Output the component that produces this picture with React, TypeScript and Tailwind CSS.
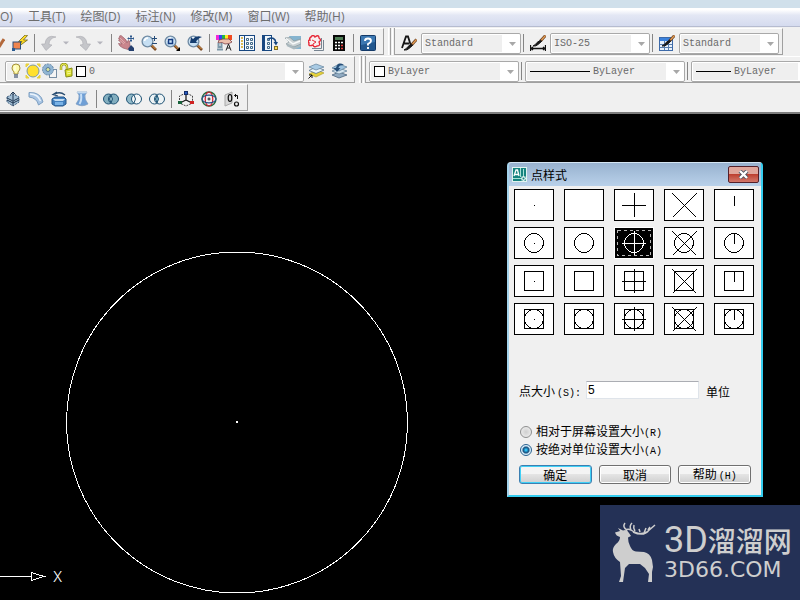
import { useState } from "react";
import type { ReactNode } from "react";

interface IIcon {
	children: ReactNode;
}

interface IToolButton {
	label: string;
	children: ReactNode;
}

interface ICombo {
	label: string;
	value: string;
	width: string;
	children?: ReactNode;
}

const menuItems = ["O)", "工具(T)", "绘图(D)", "标注(N)", "修改(M)", "窗口(W)", "帮助(H)"];

const shapes = ["none", "circle", "square", "both"];
const marks = ["dot", "blank", "plus", "cross", "tick"];

function Icon({ children }: IIcon) {
	return (
		<svg className="block h-4 w-4 shrink-0" viewBox="0 0 16 16" fill="none">
			{children}
		</svg>
	);
}

function ToolButton({ label, children }: IToolButton) {
	return (
		<button aria-label={label} className="block shrink-0">
			<Icon>{children}</Icon>
		</button>
	);
}

function Separator() {
	return <div className="mx-1.5 h-[18px] w-px shrink-0 bg-[#858585]" />;
}

function ThinSeparator() {
	return <div className="h-[18px] w-px shrink-0 bg-[#858585]" />;
}

function Grip() {
	return (
		<div className="ml-1 flex shrink-0 gap-px self-stretch">
			<div className="w-[3px] border-r border-l border-r-[#a0a0a0] border-l-white" />
			<div className="w-[3px] border-r border-l border-r-[#a0a0a0] border-l-white" />
		</div>
	);
}

function Bar({ children }: IIcon) {
	return (
		<div className="flex h-[27px] shrink-0 items-center border-t border-r border-b border-t-white border-r-[#a0a0a0] border-b-[#a0a0a0] pt-[3px]">
			{children}
		</div>
	);
}

function DropArrow() {
	return (
		<svg className="pointer-events-none absolute top-2 right-1 h-1 w-[7px]" viewBox="0 0 7 4">
			<path d="M0 0H7L3.5 4Z" fill="#a8a8a8" />
		</svg>
	);
}

function Combo({ label, value, width, children }: ICombo) {
	return (
		<div
			className={`${width} relative flex h-[21px] shrink-0 items-center rounded-[2px] border border-[#a9a9a9] bg-[#efefef] outline-1 -outline-offset-2 outline-white`}
		>
			{children}
			<select
				aria-label={label}
				className="h-[17px] min-w-0 flex-1 appearance-none border-r-[18px] border-white bg-[#efefef] pt-px pl-[3px] font-['Liberation_Mono',monospace] text-[10px] leading-4 text-[#6a6a6a]"
			>
				<option>{value}</option>
			</select>
			<DropArrow />
		</div>
	);
}

function Caret() {
	return (
		<svg className="h-1 w-[10px] shrink-0" viewBox="0 0 10 4">
			<path d="M2 0.5H8L5 3.5Z" fill="#b4b4bc" />
		</svg>
	);
}

function Lens() {
	return (
		<>
			<path d="M10 10L15 15" stroke="#7a4a24" strokeWidth="2.6" />
			<path d="M10.5 10L14.5 14" stroke="#e09a4a" strokeWidth="1" />
			<circle cx="6.5" cy="6.5" r="5.4" fill="#c6dff3" stroke="#6f8aa3" strokeWidth="1.3" />
			<path d="M3.5 6A3.5 3.5 0 0 1 7 3" stroke="#fff" strokeWidth="1.6" />
		</>
	);
}

function Brush() {
	return (
		<>
			<path d="M15.500 0.500L10.500 6" stroke="#5c3a20" strokeWidth="2.8" />
			<path d="M15.500 0.500L11.500 5" stroke="#e39a52" strokeWidth="1.5" />
			<path d="M11.500 6.500L8 9.500Q6 11.500 3 11Q6 9.500 7 7.500L10 5.500Z" fill="#171717" stroke="#171717" />
		</>
	);
}

function StandardBar() {
	return (
		<Bar>
			<div className="-ml-[11px] flex gap-[7px]">
				<ToolButton label="特性匹配">
					<path d="M15 4L10 12" stroke="#b3693c" strokeWidth="3" />
				</ToolButton>
				<ToolButton label="块编辑器">
					<path d="M13 0L6.500 6.500H10L6 12L15.500 5H11.500L15.500 0.500Z" fill="#ffdc25" stroke="#5b5415" strokeWidth="0.7" />
					<rect x="1" y="7" width="7.500" height="7" fill="#ef854e" stroke="#294f7b" />
					<path d="M0 13H3V16H0Z" fill="#2a5b91" />
				</ToolButton>
			</div>
			<Separator />
			<div className="flex items-center gap-1">
				<ToolButton label="放弃">
					<path d="M15 2Q5 -1 4 9H0.500L5 15.500L11 10L8 9.500Q8 3 15 2Z" fill="#c5c6ca" stroke="#aaaab0" strokeWidth="0.6" />
				</ToolButton>
				<Caret />
				<ToolButton label="重做">
					<path d="M1 2Q11 -1 12 9H15.500L11 15.500L5 10L8 9.500Q8 3 1 2Z" fill="#c5c6ca" stroke="#aaaab0" strokeWidth="0.6" />
				</ToolButton>
				<Caret />
			</div>
			<Separator />
			<div className="flex gap-[7px]">
				<ToolButton label="实时平移">
					<path
						d="M0.500 3L2 2.500L1.500 1L3 0.500L6 3L8 5L9 8L10 5.500L11.500 6L12 11L10 14.500L5 13L2 11L0.500 8.500L4 9L0.500 5L1.500 4.500Z"
						fill="#c9858c"
						stroke="#9b5f69"
						strokeWidth="0.7"
					/>
					<path d="M2 3L7 8M2 5.500L6 9" stroke="#e8bcbc" strokeWidth="0.7" />
					<path d="M10 14L13 10L16 13V16H11Z" fill="#243f6e" />
					<path d="M13 0V7M9.500 3.500H16M12 1.500H14M12 5.500H14M10.500 2.500V4.500M15.500 2.500V4.500" stroke="#2e588d" />
				</ToolButton>
				<ToolButton label="实时缩放">
					<Lens />
					<path d="M13.500 1V6M11 3.500H16M11 8.500H16" stroke="#254b78" />
				</ToolButton>
				<ToolButton label="窗口缩放">
					<Lens />
					<rect x="4.500" y="4.500" width="4" height="4" stroke="#153b80" strokeWidth="1.5" />
					<path d="M16 12V16H12Z" fill="#000" />
				</ToolButton>
				<ToolButton label="缩放上一个">
					<Lens />
					<path d="M3 8L4 2L6 4Q9 0 15 2Q10 4 9 7L11 8Z" fill="#153d70" />
				</ToolButton>
			</div>
			<Separator />
			<div className="flex gap-[7px]">
				<ToolButton label="特性">
					<path d="M0 0H3V5H0Z" fill="#f326d8" />
					<path d="M3 0H6V5H3Z" fill="#3343f1" />
					<path d="M6 0H9V5H6Z" fill="#20b846" />
					<path d="M9 0H12V5H9Z" fill="#ffec21" />
					<path d="M12 0H16V5H12Z" fill="#f04a20" />
					<path d="M3 5L7 4L13 4L16 7L13 8.500L9 9L6 7.500L2 8Z" fill="#ecc0ad" stroke="#7a4046" strokeWidth="0.8" />
					<path d="M2.500 8V12H5.500V8M1 14.500H7" stroke="#7c98a8" strokeWidth="2" />
					<path d="M10 15.500L12.500 9L15 15.500M11 13H14" stroke="#222" />
				</ToolButton>
				<ToolButton label="设计中心">
					<rect x="0.500" y="0.500" width="15" height="15" fill="#f7fbff" stroke="#174780" />
					<path d="M5.500 1V15" stroke="#174780" />
					<path d="M2 3H4M2 6H4M2 9H4M2 12H4" stroke="#d2a51f" strokeWidth="1.5" />
					<path d="M7.500 3.500H9.500V5.500H7.500ZM11.500 3.500H13.500V5.500H11.500ZM7.500 7.500H9.500V9.500H7.500ZM11.500 7.500H13.500V9.500H11.500ZM7.500 11.500H9.500V13.500H7.500ZM11.500 11.500H13.500V13.500H11.500Z" stroke="#416887" />
				</ToolButton>
				<ToolButton label="工具选项板">
					<rect x="0.500" y="0.500" width="9" height="15" fill="#eef6fb" stroke="#174780" />
					<path d="M2 1V15" stroke="#174780" strokeWidth="2" />
					<path d="M5.500 3.500H7.500V5.500H5.500ZM5.500 7.500H7.500V9.500H5.500ZM5.500 11.500H7.500V13.500H5.500Z" stroke="#416887" />
					<path d="M6 4Q13 1 14 8" stroke="#174780" strokeWidth="1.500" />
					<path d="M11.500 7H16L14 10.500Z" fill="#174780" />
					<rect x="12.500" y="11.500" width="3" height="3" fill="#ffdf53" stroke="#836d24" />
				</ToolButton>
				<ToolButton label="图纸集管理器">
					<path d="M4 1H16V14H9Z" fill="#86b4cf" />
					<path d="M0 3L5 2.500L9 6L16 4V9L9 12L1 9L4 7Z" fill="#cbd2d4" stroke="#84959b" strokeWidth="0.7" />
					<path d="M1 3.500L8 9L15 6" stroke="#f7f9f9" strokeWidth="1.500" />
					<path d="M2 10L9 13.500L16 10.500" stroke="#aab8be" strokeWidth="2" />
				</ToolButton>
				<ToolButton label="标记集管理器">
					<path d="M4 13.500H13.500V3M6 15.500H15.500V5" stroke="#778491" />
					<path
						d="M3 2Q5 -1 7 2Q11 -1 11 3Q14 5 11 7Q13 11 9 11Q6 13 5 10Q0 12 1 8Q-1 5 2 5Q1 3 3 2Z"
						fill="#f8efef"
						stroke="#e72938"
						strokeWidth="1.4"
					/>
					<path d="M4 5L8 7L5 9" stroke="#e72938" />
				</ToolButton>
				<ToolButton label="快速计算器">
					<rect x="2" y="0" width="12" height="16" fill="#080808" />
					<rect x="4" y="2" width="8" height="3" fill="#4f7d55" />
					<path d="M4 7.500H6M7 7.500H9M10 7.500H12M4 10.500H6M7 10.500H9M4 13.500H6M7 13.500H9" stroke="#fff" strokeWidth="1.5" />
					<path d="M10 10.500H12M10 13.500H12" stroke="#e73b3b" strokeWidth="1.500" />
				</ToolButton>
			</div>
			<Separator />
			<div className="pr-[7px]">
				<ToolButton label="帮助">
					<rect x="0.500" y="0.500" width="15" height="15" rx="1" fill="#23588f" stroke="#143a68" />
					<path d="M1 1H15V7L1 10Z" fill="#3c78b2" />
					<path d="M5 6Q5 3.500 8 3.500Q11 3.500 11 6Q11 7.500 8 9V10.500M8 12V14" stroke="#fff" strokeWidth="1.9" />
				</ToolButton>
			</div>
		</Bar>
	);
}

function StylesBar() {
	return (
		<Bar>
			<div className="pr-1 pl-1.5">
				<ToolButton label="文字样式">
					<path d="M1 13L5 1.500H7L10 11M3 8.500H8" stroke="#151515" strokeWidth="1.8" />
					<g transform="translate(0 4)">
						<Brush />
					</g>
				</ToolButton>
			</div>
			<Combo label="文字样式" value="Standard" width="w-[100px]" />
			<div className="pl-0.5">
				<ThinSeparator />
			</div>
			<div className="pr-1 pl-1.5">
				<ToolButton label="标注样式">
					<path d="M0.500 10V16M15.500 10V16M1 13.500H15M3 12L1 13.500L3 15M13 12L15 13.500L13 15" stroke="#111" strokeWidth="1.3" />
					<Brush />
				</ToolButton>
			</div>
			<Combo label="标注样式" value="ISO-25" width="w-[100px]" />
			<div className="pl-0.5">
				<ThinSeparator />
			</div>
			<div className="pr-1 pl-1.5">
				<ToolButton label="表格样式">
					<rect x="0.500" y="2.500" width="13" height="13" fill="#e8f1fb" stroke="#3d6aa9" />
					<rect x="1" y="3" width="12" height="3" fill="#3b82dd" />
					<path d="M1 9.500H13M1 12.500H13M5.500 6V15M9.500 6V15" stroke="#587eae" />
					<Brush />
				</ToolButton>
			</div>
			<div className="pr-[3px]">
				<Combo label="表格样式" value="Standard" width="w-[100px]" />
			</div>
		</Bar>
	);
}

function LayersBar() {
	return (
		<Bar>
			<div className="pl-[5px]">
				<Combo label="图层" value="0" width="w-[299px]">
					<div className="flex items-center gap-px pl-0.5">
						<Icon>
							<path d="M8 1Q4 1 4 5Q4 7 6 9V11H10V9Q12 7 12 5Q12 1 8 1Z" fill="#fffcad" stroke="#a48e39" />
							<path d="M6 12H10M6 14H10" stroke="#64738a" strokeWidth="1.500" />
							<path d="M7 3V8" stroke="#fff" />
						</Icon>
						<Icon>
							<path d="M1 1H4L1 4ZM15 1V4L12 1ZM1 15V12L4 15ZM15 15H12L15 12Z" fill="#e8d23d" stroke="#e8d23d" />
							<circle cx="8" cy="8" r="6" fill="#ffe02e" stroke="#7f9a9c" />
						</Icon>
						<Icon>
							<rect x="7.500" y="6.500" width="7" height="8" fill="#f4f4f4" stroke="#778da3" />
							<circle cx="6" cy="6.500" r="5.500" fill="#90b5d3" stroke="#6787a5" strokeDasharray="2 1" />
							<circle cx="6" cy="6.500" r="2" fill="#dce89b" stroke="#55799c" />
						</Icon>
						<Icon>
							<path d="M2 7V4Q2 1 5 1Q8 1 8 4V8" stroke="#97981e" strokeWidth="2.500" />
							<path d="M2 7V4Q2 1 5 1Q8 1 8 4V8" stroke="#eced55" />
							<path d="M6 7L13 5V13L7 14Z" fill="#d7dc2b" stroke="#858a16" />
							<path d="M8 9L12 8M8 11L12 10" stroke="#f9fb9a" />
						</Icon>
						<div className="h-[11px] w-[10px] border border-black bg-white" />
					</div>
				</Combo>
			</div>
			<div className="flex gap-[7px] pr-[7px] pl-1">
				<ToolButton label="将对象的图层置为当前">
					<path d="M1 11L9 7L16 10L8 14Z" fill="#e4d23d" stroke="#a89520" strokeWidth="0.600" />
					<path d="M1 7.500L8 4L16 7L8 10.500Z" fill="#eef7fb" stroke="#58758c" strokeWidth="0.800" />
					<path d="M1 4L8 1L16 4L8 7Z" fill="#a9cbe4" stroke="#6d8ba3" strokeWidth="0.800" />
					<path d="M0.500 15.500L4 12M1 12H4V15" stroke="#111" />
				</ToolButton>
				<ToolButton label="上一个图层">
					<path d="M1 12L8 9L16 12L8 15Z" fill="#91abc2" stroke="#4a657e" strokeWidth="0.800" />
					<path d="M1 8L8 5L16 8L8 11Z" fill="#d6e7f1" stroke="#67859d" strokeWidth="0.800" />
					<path d="M1 5L8 1L16 4L8 8Z" fill="#9cc2df" stroke="#67859d" strokeWidth="0.800" />
					<path d="M13 2Q7 -2 5 5H2.500L6 9L9.500 5H7.500Q8 1.500 13 2Z" fill="#254e78" />
				</ToolButton>
			</div>
		</Bar>
	);
}

function PropertiesBar() {
	return (
		<Bar>
			<div className="flex items-center pl-[3px]">
				<Combo label="颜色" value="ByLayer" width="w-[150px]">
					<div className="ml-1 h-[11px] w-[11px] shrink-0 border border-black bg-white" />
				</Combo>
				<div className="pr-[3px] pl-0.5">
					<ThinSeparator />
				</div>
				<Combo label="线型" value="ByLayer" width="w-[160px]">
					<div className="ml-1 h-px w-[60px] shrink-0 bg-black" />
				</Combo>
				<div className="pr-[3px] pl-0.5">
					<ThinSeparator />
				</div>
				<Combo label="线宽" value="ByLayer" width="w-[126px]">
					<div className="ml-1 h-px w-[35px] shrink-0 bg-black" />
				</Combo>
			</div>
		</Bar>
	);
}

function ModelingBar() {
	return (
		<Bar>
			<div className="flex gap-[7px] pl-[5px]">
				<ToolButton label="拉伸">
					<path d="M2 6L8 3L14 6V11L8 15L2 11Z" fill="#a5c1d7" stroke="#38597a" strokeDasharray="2 1" />
					<path d="M8 1V9M5.500 3.500L8 1L10.500 3.500M2 7L8 10L14 7M8 10V15M2 9L8 12L14 9" stroke="#203752" />
				</ToolButton>
				<ToolButton label="扫掠">
					<path d="M1 1.500Q13 1 15 11L10.500 14Q9 7 1 6Z" fill="#a9c5e4" stroke="#7d9fc1" />
					<path d="M2 3Q10 3 12.500 10" stroke="#e9f3fc" strokeWidth="1.500" />
				</ToolButton>
				<ToolButton label="旋转">
					<path d="M1 8L4 6H13L15 8V13L12 15H4L1 13Z" fill="#4380be" stroke="#25568a" />
					<path d="M2 8H14L12 10H4Z" fill="#c3dcf1" />
					<path d="M4 11H12V14H4Z" fill="#79b2e6" />
					<path d="M14 4Q9 0 4 3M6 1L2 3.500L7 5" stroke="#294c70" strokeWidth="1.300" />
				</ToolButton>
				<ToolButton label="放样">
					<path d="M3 1H13L11 4Q10 8 14 13Q8 16.500 2 13Q6 8 5 4Z" fill="#6f9fd6" stroke="#7a9abd" strokeWidth="0.700" />
					<path d="M7 3Q8 9 5.500 13" stroke="#c9e0f6" strokeWidth="2" />
					<ellipse cx="8" cy="1.500" rx="5" ry="1" fill="#c4daef" />
				</ToolButton>
			</div>
			<Separator />
			<div className="flex gap-[7px]">
				<ToolButton label="并集">
					<circle cx="5.500" cy="8" r="5" fill="#82aebf" stroke="#1e5274" />
					<circle cx="10.500" cy="8" r="5" fill="#82aebf" stroke="#1e5274" />
					<path d="M8 4Q11 8 8 12Q5 8 8 4Z" fill="#9dc6d1" stroke="#1e5274" />
				</ToolButton>
				<ToolButton label="差集">
					<circle cx="5.500" cy="8" r="5" fill="#91bac9" stroke="#1e5274" />
					<circle cx="10.500" cy="8" r="5" fill="#f3f7f8" stroke="#1e5274" />
					<path d="M8 4Q11 8 8 12" stroke="#1e5274" />
				</ToolButton>
				<ToolButton label="交集">
					<circle cx="5.500" cy="8" r="5" fill="#edf3f5" stroke="#1e5274" />
					<circle cx="10.500" cy="8" r="5" fill="#edf3f5" stroke="#1e5274" />
					<path d="M8 4Q11 8 8 12Q5 8 8 4Z" fill="#82b5c8" stroke="#1e5274" />
				</ToolButton>
			</div>
			<Separator />
			<div className="flex gap-[7px] pr-[7px]">
				<ToolButton label="三维移动">
					<path d="M8 3V9L2 12M8 9L14 12" stroke="#111" strokeWidth="1.200" />
					<path d="M1.500 12V5L8 2L14.500 5V12L8 15Z" stroke="#444" strokeDasharray="2 1" />
					<rect x="6.500" y="0.500" width="3" height="3" fill="#2559bd" stroke="#132c68" />
					<rect x="0" y="10" width="4" height="3" fill="#17623b" />
					<rect x="12" y="10" width="4" height="3" fill="#cf2222" />
				</ToolButton>
				<ToolButton label="三维旋转">
					<circle cx="8" cy="8" r="7" stroke="#256a3b" strokeWidth="1.300" />
					<ellipse cx="8" cy="8" rx="3.800" ry="7" stroke="#d41f31" strokeWidth="1.200" />
					<ellipse cx="8" cy="8" rx="7" ry="3.800" stroke="#28528a" strokeWidth="1.200" />
					<path d="M8 6.500V9.500M6.500 8H9.500" stroke="#222" />
				</ToolButton>
				<ToolButton label="三维对齐">
					<path d="M1 4L8 1V12L1 15Z" fill="#d9d9d9" stroke="#a9a9a9" />
					<ellipse cx="6" cy="7" rx="1.800" ry="3.500" stroke="#111" strokeWidth="1.200" />
					<path d="M10.500 4.500H13.500V8M10.500 4.500L12 3M10.500 4.500L12 6" stroke="#111" />
					<circle cx="12.500" cy="13" r="2" stroke="#111" strokeWidth="1.200" />
				</ToolButton>
			</div>
		</Bar>
	);
}

interface IPointGlyph {
	shape: string;
	mark: string;
	selected: boolean;
}

function PointGlyph({ shape, mark, selected }: IPointGlyph) {
	return (
		<svg
			className="block h-8 w-10"
			viewBox="0 0 40 32"
			fill="none"
			stroke={selected ? "#fff" : "#000"}
			shapeRendering="crispEdges"
		>
			<rect x="0.5" y="0.5" width="39" height="31" fill={selected ? "#000" : "#fff"} />
			{selected && <rect x="3.500" y="3.500" width="33" height="25" stroke="#b8b8b8" strokeDasharray="3 3" />}
			{(shape === "circle" || shape === "both") && <circle cx="20" cy="16" r="9.500" />}
			{(shape === "square" || shape === "both") && <rect x="10.500" y="6.500" width="19" height="19" />}
			{mark === "dot" && <path d="M20 16.500H21" />}
			{mark === "plus" && <path d="M8 16.500H32M20.500 4V28" />}
			{mark === "cross" && <path d="M8.500 4.500L32.500 28.500M32.500 4.500L8.500 28.500" />}
			{mark === "tick" && <path d={shape === "none" ? "M20.500 7V17" : "M20.500 6V17"} />}
		</svg>
	);
}

const actionButton =
	"h-[19px] w-[73px] rounded-[3px] border bg-linear-to-b from-[#f4f4f4] from-45% via-[#e4e4e4] via-50% to-[#cfcfcf] leading-4";

function PointStyleDialog() {
	const [selected, setSelected] = useState("circle-plus");
	const [size, setSize] = useState("5");
	const [mode, setMode] = useState("absolute");

	return (
		<section
			aria-label="点样式"
			className="absolute top-12 right-[37px] w-64 rounded-t-[4px] border-x-2 border-t border-b-2 border-t-[#d4e4f2] border-r-[#35cdef] border-b-[#35cdef] border-l-[#a4d3ec] bg-[#f0f0f0] font-['Noto_Sans_CJK_SC',sans-serif] text-xs leading-4 text-black"
		>
			<header className="flex h-[23px] items-center rounded-t-[2px] bg-linear-to-b from-[#98b2cf] to-[#b9d1ea] pr-0.5 pl-[3px]">
				<svg className="h-[15px] w-[15px]" viewBox="0 0 15 15" fill="none">
					<rect x="0.500" y="0.500" width="14" height="14" fill="#15837f" stroke="#e1f3ef" />
					<path d="M2 9L4 3H5.500L7 9M3 7.500H6" stroke="#fff" strokeWidth="1.300" />
					<path d="M8.500 1V10M1 11.500H9M11.500 2V14M8 11.500H14" stroke="#a8e2d7" />
					<rect x="10" y="10" width="3" height="3" fill="#15837f" stroke="#fff" />
				</svg>
				<h1 className="flex-1 pl-1">点样式</h1>
				<button
					aria-label="关闭"
					className="flex h-[17px] w-[31px] items-center justify-center rounded-[2px] border border-[#54202a] bg-linear-to-b from-[#e0a69c] from-45% via-[#bd4031] via-50% to-[#d2776a]"
				>
					<svg className="h-[9px] w-[11px]" viewBox="0 0 11 9">
						<path d="M2 1L9 8M9 1L2 8" stroke="#4c5361" strokeWidth="4" />
						<path d="M2 1L9 8M9 1L2 8" stroke="#fff" strokeWidth="2.400" />
					</svg>
				</button>
			</header>
			<div className="px-[5px] pt-[3px] pb-[11px]">
				<div className="grid grid-cols-[repeat(5,40px)] gap-x-2.5 gap-y-1.5">
					{shapes.map((shape) =>
						marks.map((mark) => {
							const id = `${shape}-${mark}`;
							return (
								<button
									key={id}
									aria-label={id}
									aria-pressed={id === selected}
									onClick={() => setSelected(id)}
								>
									<PointGlyph shape={shape} mark={mark} selected={id === selected} />
								</button>
							);
						})
					)}
				</div>
				<div className="px-[5px]">
					<div className="mt-[46px] flex h-[18px] items-center">
						<label htmlFor="point-size" className="w-[67px] pt-1">
							点大小
							<span className="pl-0.5 font-['Liberation_Mono',monospace] text-[10px]">(S):</span>
						</label>
						<input
							id="point-size"
							value={size}
							onChange={(e) => setSize(e.target.value)}
							className="h-[18px] w-[113px] border border-[#dfe4ea] border-t-[#abadb3] bg-white px-px font-['Liberation_Sans',sans-serif]"
						/>
						<span className="pt-1 pl-[7px]">单位</span>
					</div>
					<div className="mt-6 mb-1.5">
						{[
							{ id: "relative", text: "相对于屏幕设置大小", hotkey: "(R)" },
							{ id: "absolute", text: "按绝对单位设置大小", hotkey: "(A)" },
						].map((item) => (
							<label key={item.id} className="flex h-[18px] items-center gap-1">
								<input
									type="radio"
									name="size-mode"
									checked={mode === item.id}
									onChange={() => setMode(item.id)}
									className="ml-px h-3 w-3 appearance-none rounded-full border border-[#8e8f8f] bg-radial from-[#cfcfcf] to-[#f4f4f4] checked:border-[#2a6290] checked:from-[#2fc0f4] checked:from-10% checked:via-[#14507f] checked:via-40% checked:to-[#d9eefa] checked:to-60%"
								/>
								<span>
									{item.text}
									<span className="font-['Liberation_Mono',monospace] text-[10px]">{item.hotkey}</span>
								</span>
							</label>
						))}
					</div>
					<div className="flex gap-[7px]">
						<button className={`${actionButton} border-[#3c7fb1] inset-ring-1 inset-ring-[#3fd0f6]`}>确定</button>
						<button className={`${actionButton} border-[#707070] inset-ring-1 inset-ring-white`}>取消</button>
						<button className={`${actionButton} border-[#707070] inset-ring-1 inset-ring-white`}>
							帮助
							<span className="pl-0.5 font-['Liberation_Mono',monospace] text-[10px]">(H)</span>
						</button>
					</div>
				</div>
			</div>
		</section>
	);
}

function Watermark() {
	return (
		<div className="absolute right-0 bottom-0 flex h-[95px] w-[200px] bg-[#243156] pt-[17px] pl-3 text-[#cecece]">
			<svg className="h-[62px] w-11 shrink-0" viewBox="0 0 44 62" fill="none">
				<path
					d="M3 10.500L8 9L6 6L11 8.500Q15 7 17 11L19 14L16 15.500Q16 20 18 24Q20 29 24 29.500L32 30Q38 31 40 38L41 45L40 50V60H36L37 52L33 46L28 42Q22 42 17 42L13 46L11 60H7L9 54L8 40Q2 36 1 30Q0 26 4 22Q8 19 8 15Q4 14 3 10.500Z"
					fill="currentColor"
				/>
				<path
					d="M14 9Q15 6 19 8Q28 14 35 10L43 3M15 8Q10 5 13 1M19 8Q17 4 20 1M23 9Q21 6 22 3M28 10L27 7M32 11L34 6M36 8L38 5M21 10Q32 15 37 8"
					stroke="currentColor"
					strokeWidth="1.500"
				/>
			</svg>
			<div className="flex flex-col pl-2">
				<div className="flex h-9 items-center font-['Noto_Sans_CJK_SC',sans-serif] text-[28px] leading-9 font-medium whitespace-nowrap">
					<span className="font-['Roboto',sans-serif] text-[36px] font-normal">3D</span>
					<span>溜溜网</span>
				</div>
				<span className="font-['DejaVu_Sans',sans-serif] text-[22px] leading-6">3D66.COM</span>
			</div>
		</div>
	);
}

function App() {
	return (
		<div className="flex min-h-screen flex-col bg-black">
			<div className="shrink-0 overflow-hidden border-b-2 border-[#7d7d7d] bg-[#f0f0f0]">
				<div className="h-2 bg-[#d0e0eb]" />
				<nav className="flex h-[19px] items-center gap-[15px] border-b border-[#b6bcd0] bg-linear-to-b from-white from-10% via-[#e3e7f4] via-40% to-[#d5dbef] font-['Open_Sans','Noto_Sans_CJK_SC',sans-serif] text-xs leading-4 text-[#6d6d6d]">
					{menuItems.map((item) => (
						<button key={item} className="shrink-0">
							{item}
						</button>
					))}
				</nav>
				<div className="flex flex-col gap-px py-px">
					<div className="flex">
						<StandardBar />
						<Grip />
						<StylesBar />
					</div>
					<div className="flex">
						<LayersBar />
						<Grip />
						<PropertiesBar />
					</div>
					<div className="flex">
						<ModelingBar />
					</div>
				</div>
			</div>
			<main className="relative min-h-[486px] flex-1 overflow-hidden">
				<svg className="absolute top-0 left-0 h-[486px] w-[500px]" fill="none" stroke="#fff" shapeRendering="crispEdges">
					<circle cx="237" cy="308.500" r="170.500" />
					<path d="M236 307H238V309H236Z" fill="#fff" stroke="none" />
					<path d="M0 462.500H31M31.500 458.500V466.500L44 462.500Z" />
					<text
						x="53"
						y="468"
						fill="#fff"
						stroke="none"
						className="font-['Inter',sans-serif] text-[14px] font-light"
					>
						X
					</text>
				</svg>
				<PointStyleDialog />
				<Watermark />
			</main>
		</div>
	);
}

export default App;
